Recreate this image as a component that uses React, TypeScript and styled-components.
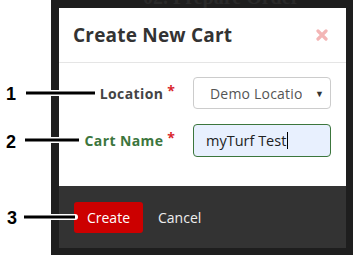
import styled, { createGlobalStyle } from "styled-components";

const GlobalStyle = createGlobalStyle`
  html, body {
    margin: 0;
    padding: 0;
    background: #ffffff;
  }
  body {
    font-family: "Open Sans", "Liberation Sans", sans-serif;
  }
`;

const Page = styled.div`
  position: relative;
  display: flex;
  width: 353px;
  height: 255px;
  overflow: hidden;
  background: #ffffff;
`;

const Gutter = styled.div`
  width: 51px;
  flex-shrink: 0;
  background: #ffffff;
`;

const Backdrop = styled.div`
  position: relative;
  flex: 1;
  display: flex;
  flex-direction: column;
  padding: 8px 7px 7px 8px;
  background: #1e1e1e;
`;

const PageBehind = styled.div`
  position: absolute;
  top: -14px;
  left: 92px;
  font-family: "Liberation Serif", serif;
  font-size: 20px;
  font-weight: bold;
  color: #2a2a2a;
  white-space: nowrap;
`;

const Modal = styled.div`
  position: relative;
  display: flex;
  flex-direction: column;
  width: 287px;
  background: #ffffff;
`;

const Header = styled.div`
  display: flex;
  align-items: center;
  justify-content: space-between;
  height: 54px;
  padding: 0 18px 0 14px;
  border-bottom: 1px solid #e5e5e5;
`;

const Title = styled.h4`
  margin: 0;
  font-size: 19px;
  font-weight: 700;
  letter-spacing: 0.2px;
  color: #333333;
`;

const Close = styled.button`
  display: flex;
  padding: 0;
  border: 0;
  background: none;
  cursor: pointer;
`;

const Body = styled.div`
  display: flex;
  flex-direction: column;
  gap: 15px;
  padding: 14px 15px 29px;
`;

const Row = styled.div`
  display: flex;
  align-items: center;
`;

const Label = styled.label<{ $ok?: boolean }>`
  width: 101px;
  margin-right: 18px;
  text-align: right;
  font-size: 14px;
  font-weight: 700;
  letter-spacing: 0.4px;
  color: ${(p) => (p.$ok ? "#3c763d" : "#444444")};
  white-space: nowrap;
`;

const Req = styled.span`
  position: relative;
  top: -3px;
  margin-left: 4px;
  letter-spacing: 0;
  color: #d9262e;
`;

const SelectBox = styled.div`
  display: flex;
  align-items: center;
  box-sizing: border-box;
  width: 138px;
  height: 32px;
  padding: 0 6px 0 16px;
  border: 1px solid #cccccc;
  border-radius: 4px;
  background: #ffffff;
  font-size: 14px;
  letter-spacing: 0.2px;
  color: #555555;
`;

const SelectText = styled.span`
  flex: 1;
  overflow: hidden;
  white-space: nowrap;
`;

const Arrow = styled.span`
  margin-left: 13px;
  font-size: 9px;
  color: #333333;
`;

const InputBox = styled.div`
  display: flex;
  align-items: center;
  box-sizing: border-box;
  width: 138px;
  height: 33px;
  padding: 0 12px;
  border: 1px solid #3c763d;
  border-radius: 4px;
  background: #e8f0fe;
  font-size: 14.5px;
  color: #222222;
`;

const Caret = styled.span`
  display: inline-block;
  width: 1px;
  height: 17px;
  margin-left: 1px;
  background: #000000;
`;

const Footer = styled.div`
  display: flex;
  align-items: center;
  gap: 15px;
  height: 62px;
  box-sizing: border-box;
  padding: 0 15px;
  background: #333333;
`;

const CreateButton = styled.button`
  width: 69px;
  height: 31px;
  padding: 0;
  border: 0;
  border-radius: 3px;
  background: #cc0000;
  color: #ffffff;
  font-family: inherit;
  font-size: 14px;
`;

const CancelButton = styled.button`
  padding: 0;
  border: 0;
  background: none;
  color: #eeeeee;
  font-family: inherit;
  font-size: 14px;
`;

const Callouts = styled.svg`
  position: absolute;
  left: 0;
  top: 0;
  pointer-events: none;
`;

const Num = styled.span<{ $top: number; $left: number }>`
  position: absolute;
  top: ${(p) => p.$top}px;
  left: ${(p) => p.$left}px;
  font-family: "Liberation Sans", Arial, sans-serif;
  font-size: 18px;
  font-weight: 700;
  line-height: 1;
  color: #000000;
`;

const callouts = [
  { n: "1", numTop: 85, numLeft: 6, x1: 26, x2: 95, y: 93 },
  { n: "2", numTop: 133, numLeft: 6, x1: 25, x2: 79, y: 140 },
  { n: "3", numTop: 209, numLeft: 7, x1: 24, x2: 75, y: 217 },
];

export default function App() {
  return (
    <>
      <GlobalStyle />
      <Page>
        <Gutter />
        <Backdrop>
          <PageBehind>02. Prepare Order</PageBehind>
          <Modal>
            <Header>
              <Title>Create New Cart</Title>
              <Close aria-label="Close">
                <svg width="12" height="12" viewBox="0 0 12 12">
                  <path
                    d="M2 2 L10 10 M10 2 L2 10"
                    stroke="#f3b5b5"
                    strokeWidth="3.2"
                    strokeLinecap="round"
                  />
                </svg>
              </Close>
            </Header>
            <Body>
              <Row>
                <Label>
                  Location<Req>*</Req>
                </Label>
                <SelectBox>
                  <SelectText>Demo Location</SelectText>
                  <Arrow>▼</Arrow>
                </SelectBox>
              </Row>
              <Row>
                <Label $ok>
                  Cart Name<Req>*</Req>
                </Label>
                <InputBox>
                  myTurf Test
                  <Caret />
                </InputBox>
              </Row>
            </Body>
            <Footer>
              <CreateButton>Create</CreateButton>
              <CancelButton>Cancel</CancelButton>
            </Footer>
          </Modal>
        </Backdrop>
        <Callouts width="353" height="255">
          {callouts.map((c) => (
            <g key={c.n}>
              <line x1={c.x1} y1={c.y} x2={c.x2} y2={c.y} stroke="#ffffff" strokeWidth="6" strokeLinecap="round" />
              <line x1={c.x1} y1={c.y} x2={c.x2} y2={c.y} stroke="#000000" strokeWidth="3" />
            </g>
          ))}
        </Callouts>
        {callouts.map((c) => (
          <Num key={c.n} $top={c.numTop} $left={c.numLeft}>
            {c.n}
          </Num>
        ))}
      </Page>
    </>
  );
}
